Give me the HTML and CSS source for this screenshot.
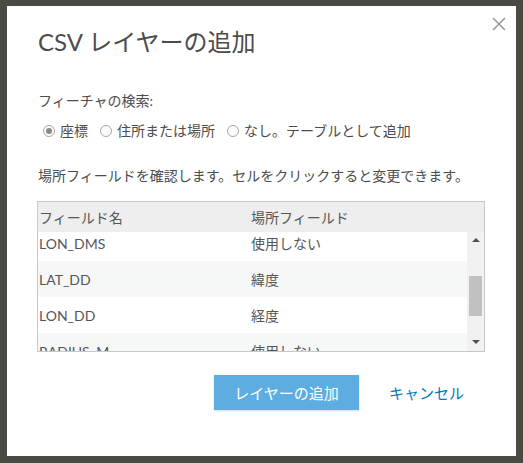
FILE: index.html
```html
<!DOCTYPE html>
<html lang="ja">
<head>
  <meta charset="UTF-8">
  <title>CSV レイヤーの追加</title>
  <link rel="stylesheet" href="styles.css">
</head>
<body>

  <div class="dialog">
    <button class="close" aria-label="閉じる">
      <svg width="14" height="14" viewBox="0 0 14 14"><path d="M1 1L13 13M13 1L1 13" stroke="#9a9a9a" stroke-width="1.6" fill="none"/></svg>
    </button>

    <h1 class="title">CSV レイヤーの追加</h1>

    <p class="label">フィーチャの検索:</p>
    <div class="radios">
      <label class="radio"><span class="dot checked"></span>座標</label>
      <label class="radio"><span class="dot"></span>住所または場所</label>
      <label class="radio"><span class="dot"></span>なし。テーブルとして追加</label>
    </div>

    <p class="hint">場所フィールドを確認します。セルをクリックすると変更できます。</p>

    <div class="grid">
      <div class="grid-head">
        <div class="col1">フィールド名</div>
        <div class="col2">場所フィールド</div>
      </div>
      <div class="grid-body">
        <div class="rows">
          <div class="row"><div class="col1">LON_DMS</div><div class="col2">使用しない</div></div>
          <div class="row alt"><div class="col1">LAT_DD</div><div class="col2">緯度</div></div>
          <div class="row"><div class="col1">LON_DD</div><div class="col2">経度</div></div>
          <div class="row alt"><div class="col1">RADIUS_M</div><div class="col2">使用しない</div></div>
        </div>
        <div class="scrollbar">
          <span class="arrow up"></span>
          <span class="thumb"></span>
          <span class="arrow down"></span>
        </div>
      </div>
    </div>

    <div class="actions">
      <button class="primary">レイヤーの追加</button>
      <a class="cancel" href="#">キャンセル</a>
    </div>
  </div>

</body>
</html>
```

FILE: styles.css
```css
body { margin: 0; background: #4a4a43; font-family: Lato, "Noto Sans CJK JP", sans-serif; color: #4c4c4c; }
.dialog { position: relative; width: 509px; height: 450px; margin: 6px 0 0 7px; background: white; box-sizing: border-box; padding: 19px 30px 0 31px; }
.close { position: absolute; top: 11px; right: 10px; background: none; border: none; padding: 0; cursor: pointer; }
.title { margin: 0; font-size: 24px; font-weight: normal; line-height: 34px; color: #4c4c4c; }
.label { margin: 32px 0 0 0; font-size: 14px; line-height: 20px; }
.radios { display: flex; gap: 12px; margin: 10px 0 0 5px; font-size: 14px; line-height: 20px; }
.radio { display: flex; align-items: center; gap: 5px; }
.dot { width: 12px; height: 12px; border: 1px solid #a8a8a8; border-radius: 50%; box-sizing: border-box; display: flex; align-items: center; justify-content: center; background: #fbfbfb; }
.dot.checked::after { content: ""; width: 6px; height: 6px; border-radius: 50%; background: #8a8a8a; }
.hint { margin: 25px 0 0 0; font-size: 14px; line-height: 20px; }
.grid { margin-top: 15px; margin-left: -1px; width: 448px; box-sizing: border-box; border: 1px solid #c8c8c8; font-size: 14px; color: #555; }
.grid-head { display: flex; height: 30px; align-items: center; background: #eeeeee; }
.col1 { width: 212px; padding-left: 1px; }
.col2 { flex: 1; }
.grid-body { display: flex; height: 119px; overflow: hidden; }
.rows { flex: 1; margin-top: -7px; }
.row { display: flex; height: 36px; align-items: center; background: white; }
.row.alt { background: #f6f8f8; }
.scrollbar { width: 17px; background: #f1f1f1; position: relative; }
.thumb { position: absolute; left: 2px; top: 44px; width: 13px; height: 40px; background: #c1c1c1; }
.arrow { position: absolute; left: 5px; width: 0; height: 0; border-left: 4px solid transparent; border-right: 4px solid transparent; }
.arrow.up { top: 6px; border-bottom: 4px solid #505050; }
.arrow.down { bottom: 7px; border-top: 4px solid #505050; }
.actions { display: flex; align-items: center; margin: 23px 0 0 176px; gap: 30px; }
.primary { width: 145px; height: 35px; background: #5dade0; color: white; border: none; font-family: inherit; font-size: 15px; cursor: pointer; box-shadow: 0 1px 2px rgba(0,0,0,0.15); }
.cancel { color: #0079c1; text-decoration: none; font-size: 15px; }
```
